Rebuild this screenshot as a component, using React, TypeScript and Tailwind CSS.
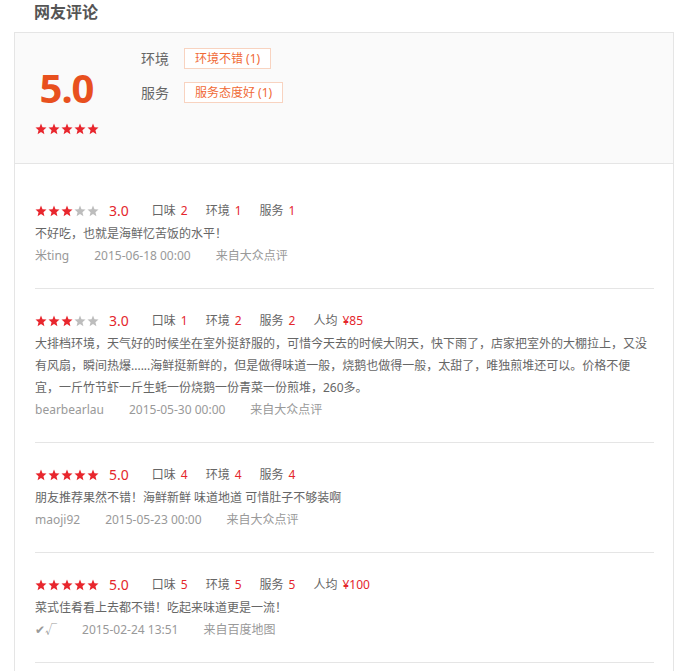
const font = { fontFamily: '"Noto Sans", "Noto Sans CJK SC", sans-serif' }

type Review = {
  stars: number
  score: string
  taste: number
  env: number
  service: number
  price?: string
  text: string
  user: string
  date: string
  source: string
}

const reviews: Review[] = [
  {
    stars: 3,
    score: '3.0',
    taste: 2,
    env: 1,
    service: 1,
    text: '不好吃，也就是海鲜忆苦饭的水平！',
    user: '米ting',
    date: '2015-06-18 00:00',
    source: '来自大众点评',
  },
  {
    stars: 3,
    score: '3.0',
    taste: 1,
    env: 2,
    service: 2,
    price: '¥85',
    text: '大排档环境，天气好的时候坐在室外挺舒服的，可惜今天去的时候大阴天，快下雨了，店家把室外的大棚拉上，又没有风扇，瞬间热爆......海鲜挺新鲜的，但是做得味道一般，烧鹅也做得一般，太甜了，唯独煎堆还可以。价格不便宜，一斤竹节虾一斤生蚝一份烧鹅一份青菜一份煎堆，260多。',
    user: 'bearbearlau',
    date: '2015-05-30 00:00',
    source: '来自大众点评',
  },
  {
    stars: 5,
    score: '5.0',
    taste: 4,
    env: 4,
    service: 4,
    text: '朋友推荐果然不错！海鲜新鲜 味道地道 可惜肚子不够装啊',
    user: 'maoji92',
    date: '2015-05-23 00:00',
    source: '来自大众点评',
  },
  {
    stars: 5,
    score: '5.0',
    taste: 5,
    env: 5,
    service: 5,
    price: '¥100',
    text: '菜式佳肴看上去都不错！吃起来味道更是一流！',
    user: '✔√',
    date: '2015-02-24 13:51',
    source: '来自百度地图',
  },
]

function Star({ on }: { on: boolean }) {
  return (
    <svg width="12" height="12" viewBox="0 0 24 24" className={on ? 'fill-[#e8262d]' : 'fill-[#bdbdbd]'}>
      <polygon points="12,1 15,8.6 23,9.2 16.9,14.3 18.8,22.5 12,18 5.2,22.5 7.1,14.3 1,9.2 9,8.6" />
    </svg>
  )
}

function Stars({ n }: { n: number }) {
  return (
    <div className="flex gap-[1px]">
      {[0, 1, 2, 3, 4].map((i) => (
        <Star key={i} on={i < n} />
      ))}
    </div>
  )
}

function Item({ label, value }: { label: string; value: string | number }) {
  return (
    <span className="mr-[18px] text-[#666]">
      {label}
      <span className="ml-[5px] text-[#e4262d]">{value}</span>
    </span>
  )
}

function ReviewItem({ r }: { r: Review }) {
  return (
    <div className="pt-5 pb-[21px] border-b border-[#e5e5e5]">
      <div className="flex items-center h-6 text-xs">
        <Stars n={r.stars} />
        <span className="ml-[10px] mr-[23px] text-sm text-[#e4262d]">{r.score}</span>
        <Item label="口味" value={r.taste} />
        <Item label="环境" value={r.env} />
        <Item label="服务" value={r.service} />
        {r.price && <Item label="人均" value={r.price} />}
      </div>
      <p className="text-xs leading-[22px] text-[#666]">{r.text}</p>
      <div className="flex gap-[25px] text-xs leading-[22px] text-[#999]">
        <span>{r.user}</span>
        <span>{r.date}</span>
        <span>{r.source}</span>
      </div>
    </div>
  )
}

export default function App() {
  return (
    <div className="bg-white min-h-screen" style={font}>
      {/* Title */}
      <div className="h-8 pl-[34px] leading-6 text-base font-bold text-[#555]">网友评论</div>

      <div className="ml-[14px] w-[660px] border border-[#e5e5e5]">
        {/* Summary */}
        <div className="h-[131px] flex bg-[#fafafa] border-b border-[#e5e5e5] pl-5">
          <div className="w-[63px] pt-[35px] flex flex-col items-center">
            <div className="h-10 leading-10 text-[40px] font-bold tracking-[-1px] text-[#e8501e]">5.0</div>
            <div className="mt-[15px]">
              <Stars n={5} />
            </div>
          </div>
          <div className="ml-[43px] pt-[15px] flex flex-col gap-[13px]">
            <div className="flex items-center">
              <span className="w-7 mr-[15px] text-sm text-[#666]">环境</span>
              <span className="h-[21px] leading-[19px] px-[10px] border border-[#f8d3c0] bg-white text-xs text-[#f06a36]">
                环境不错 (1)
              </span>
            </div>
            <div className="flex items-center">
              <span className="w-7 mr-[15px] text-sm text-[#666]">服务</span>
              <span className="h-[21px] leading-[19px] px-[10px] border border-[#f8d3c0] bg-white text-xs text-[#f06a36]">
                服务态度好 (1)
              </span>
            </div>
          </div>
        </div>

        {/* Reviews */}
        <div className="pl-5 pr-[19px] pt-[15px] pb-10">
          {reviews.map((r, i) => (
            <ReviewItem key={i} r={r} />
          ))}
        </div>
      </div>
    </div>
  )
}
